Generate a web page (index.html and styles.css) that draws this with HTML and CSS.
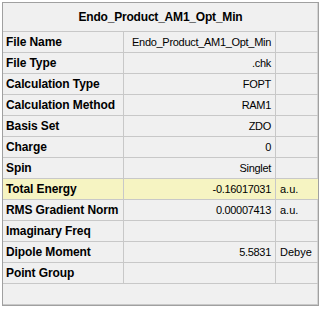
FILE: index.html
```html
<!DOCTYPE html>
<html lang="en">

<head>
    <meta charset="UTF-8">
    <title>Summary</title>
    <link rel="stylesheet" href="styles.css">
</head>

<body>

    <div class="panel">
        <!-- Title -->
        <div class="title">Endo_Product_AM1_Opt_Min</div>

        <!-- Property rows -->
        <div class="row">
            <div class="label">File Name</div>
            <div class="value">Endo_Product_AM1_Opt_Min</div>
            <div class="unit"></div>
        </div>
        <div class="row">
            <div class="label">File Type</div>
            <div class="value">.chk</div>
            <div class="unit"></div>
        </div>
        <div class="row">
            <div class="label">Calculation Type</div>
            <div class="value">FOPT</div>
            <div class="unit"></div>
        </div>
        <div class="row">
            <div class="label">Calculation Method</div>
            <div class="value">RAM1</div>
            <div class="unit"></div>
        </div>
        <div class="row">
            <div class="label">Basis Set</div>
            <div class="value">ZDO</div>
            <div class="unit"></div>
        </div>
        <div class="row">
            <div class="label">Charge</div>
            <div class="value">0</div>
            <div class="unit"></div>
        </div>
        <div class="row">
            <div class="label">Spin</div>
            <div class="value">Singlet</div>
            <div class="unit"></div>
        </div>
        <div class="row highlight">
            <div class="label">Total Energy</div>
            <div class="value">-0.16017031</div>
            <div class="unit">a.u.</div>
        </div>
        <div class="row">
            <div class="label">RMS Gradient Norm</div>
            <div class="value">0.00007413</div>
            <div class="unit">a.u.</div>
        </div>
        <div class="row">
            <div class="label">Imaginary Freq</div>
            <div class="value"></div>
            <div class="unit"></div>
        </div>
        <div class="row">
            <div class="label">Dipole Moment</div>
            <div class="value">5.5831</div>
            <div class="unit">Debye</div>
        </div>
        <div class="row">
            <div class="label">Point Group</div>
            <div class="value"></div>
            <div class="unit"></div>
        </div>

        <!-- Empty area under the rows -->
        <div class="blank"></div>
    </div>

</body>

</html>
```

FILE: styles.css
```css
/* Global */
body {
    margin: 0;
    padding: 2px;
    background-color: white;
    font-family: "Liberation Sans", Arial, sans-serif;
    font-size: 12px;
    color: #000;
}

/* Outer panel */
.panel {
    width: 315px;
    height: 302px;
    border: 1px solid #a0a0a0;
    box-shadow: inset -1px -1px 0 #d4d4d4;
    background-color: #f0f0f0;
    display: flex;
    flex-direction: column;
}

/* Title bar */
.title {
    height: 28px;
    line-height: 28px;
    text-align: center;
    font-weight: bold;
    letter-spacing: -0.2px;
    border-bottom: 1px solid #c8c8c8;
}

/* Rows */
.row {
    display: grid;
    grid-template-columns: 121px 152px 1fr;
    height: 20px;
    line-height: 20px;
    border-bottom: 1px solid #c8c8c8;
}

.row.highlight {
    background-color: #f6f4c2;
}

.label {
    padding-left: 3px;
    font-weight: bold;
    letter-spacing: -0.1px;
    border-right: 1px solid #c8c8c8;
    white-space: nowrap;
}

.value {
    padding-right: 4px;
    text-align: right;
    font-size: 11px;
    letter-spacing: -0.3px;
    border-right: 1px solid #c8c8c8;
    white-space: nowrap;
}

.unit {
    padding-left: 4px;
    font-size: 11px;
    white-space: nowrap;
}

.blank {
    height: 20px;
    border-bottom: 1px solid #c8c8c8;
}
```
